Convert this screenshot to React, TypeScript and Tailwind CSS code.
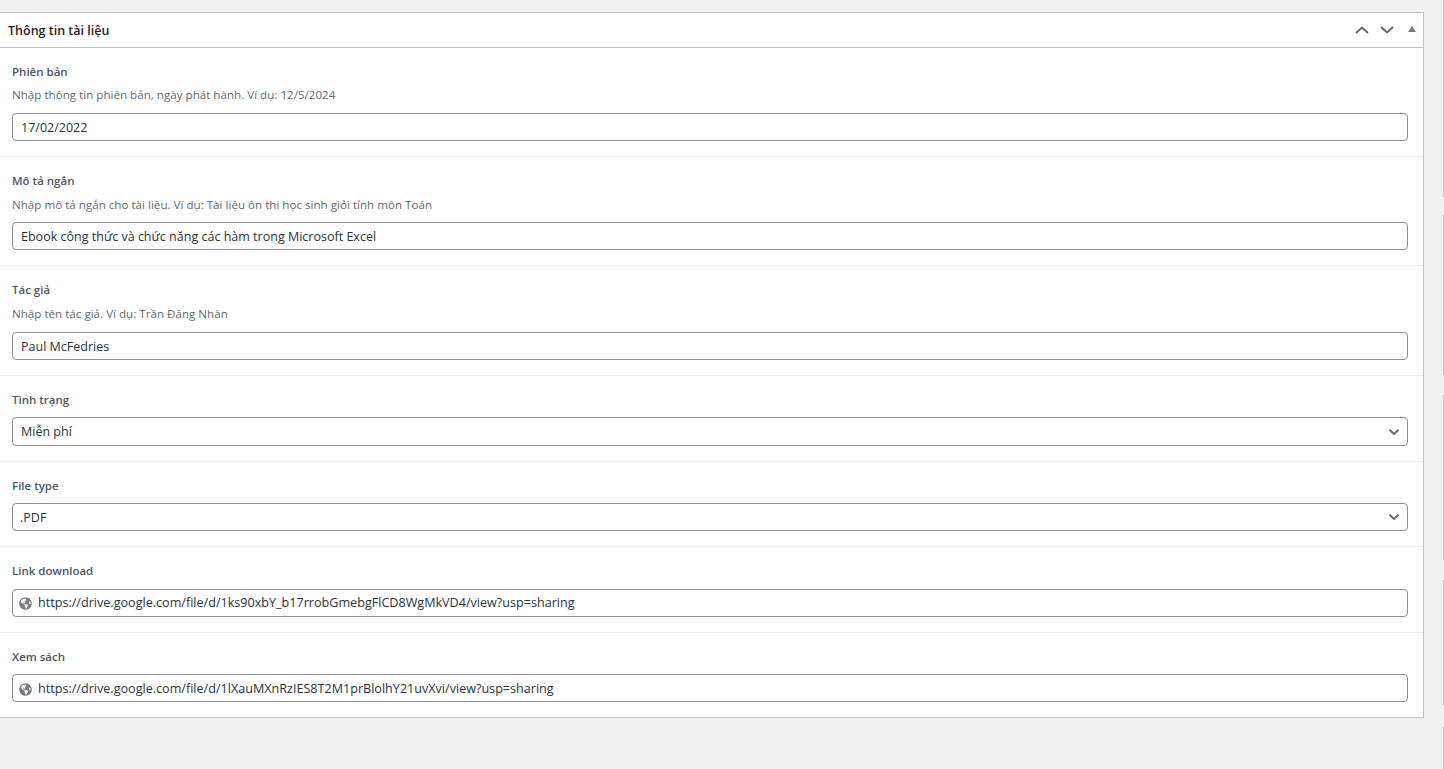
import React from "react";
import { FaGlobeAmericas } from "react-icons/fa";

const font = { fontFamily: '"Open Sans", "Noto Sans", sans-serif' };

function Caret() {
  return (
    <svg width="12" height="8" viewBox="0 0 12 8" className="absolute right-[7px] top-1/2 -translate-y-1/2">
      <path d="M1.5 1.800 6 6l4.500-4.200" fill="none" stroke="#646970" strokeWidth="2" />
    </svg>
  );
}

function Chevron({ up, cls }: { up?: boolean; cls: string }) {
  return (
    <svg width="14" height="8" viewBox="0 0 14 8" className={cls}>
      <path d={up ? "M1 7 7 1.500 13 7" : "M1 1 7 6.500 13 1"} fill="none" stroke="#646970" strokeWidth="2" />
    </svg>
  );
}

function Box({
  h,
  pl = "pl-[8px]",
  text = "pt-[2px] text-[12.53px]",
  children,
}: {
  h: string;
  pl?: string;
  text?: string;
  children: React.ReactNode;
}) {
  return (
    <div className={`relative flex items-center rounded-[4px] border border-[#8c8f94] bg-white text-[#2c3338] ${text} ${h} ${pl}`}>
      {children}
    </div>
  );
}

function Field({
  label,
  desc,
  descTop = "mt-[5px]",
  last,
  children,
  cls,
}: {
  label: string;
  desc?: string;
  descTop?: string;
  last?: boolean;
  children: React.ReactNode;
  cls: string;
}) {
  return (
    <div className={`pl-[12px] pr-[15px] pt-[15px] ${cls} ${last ? "" : "border-b border-[#f0f0f0]"}`}>
      <div className="text-[11.5px] leading-[18px] font-semibold text-[#50575e]">{label}</div>
      {desc && <div className={`${descTop} text-[11.62px] leading-[18px] text-[#646970]`}>{desc}</div>}
      {children}
    </div>
  );
}

function LinkValue({ url }: { url: string }) {
  return (
    <>
      <FaGlobeAmericas size={13} color="#787c82" className="shrink-0" />
      <span className="ml-[6px]">{url}</span>
    </>
  );
}

function EdgeLine() {
  return (
    <div className="absolute right-0 top-0 flex h-full w-[1px] flex-col">
      <div className="h-[197px] bg-[#c6c6c6]" />
      <div className="h-[18px]" />
      <div className="h-[160px] bg-[#c6c6c6]" />
      <div className="h-[20px]" />
      <div className="h-[165px] bg-[#c6c6c6]" />
      <div className="h-[20px]" />
      <div className="h-[125px] bg-[#c6c6c6]" />
      <div className="h-[22px]" />
      <div className="h-[42px] bg-[#c6c6c6]" />
    </div>
  );
}

export default function App() {
  return (
    <div className="relative h-[769px] overflow-hidden bg-[#f0f0f1] pt-[12px]" style={font}>
      <EdgeLine />
      <div className="w-[1424px] border-y border-r border-[#c3c4c7] bg-white">
        <div className="flex h-[35px] items-center justify-between border-b border-[#c3c4c7] pl-[8px] pr-[7px]">
          <div className="pt-[2px] text-[12.5px] font-semibold text-[#1d2327]">Thông tin tài liệu</div>
          <div className="flex items-center">
            <Chevron up cls="mr-[11px]" />
            <Chevron cls="mr-[14px]" />
            <div className="mb-[2px] h-0 w-0 border-x-[4px] border-b-[6px] border-x-transparent border-b-[#787c82]" />
          </div>
        </div>
        <Field cls="h-[109px]" label="Phiên bản" desc="Nhập thông tin phiên bản, ngày phát hành. Ví dụ: 12/5/2024">
          <div className="mt-[9px]"><Box h="h-[28px]">17/02/2022</Box></div>
        </Field>
        <Field cls="h-[109px]" descTop="mt-[6px]" label="Mô tả ngắn" desc="Nhập mô tả ngắn cho tài liệu. Ví dụ: Tài liệu ôn thi học sinh giỏi tỉnh môn Toán">
          <div className="mt-[8px]"><Box h="h-[28px]">Ebook công thức và chức năng các hàm trong Microsoft Excel</Box></div>
        </Field>
        <Field cls="h-[110px]" descTop="mt-[6px]" label="Tác giả" desc="Nhập tên tác giả. Ví dụ: Trần Đăng Nhàn">
          <div className="mt-[9px]"><Box h="h-[28px]">Paul McFedries</Box></div>
        </Field>
        <Field cls="h-[86px]" label="Tình trạng">
          <div className="mt-[8px]"><Box h="h-[29px]" text="pt-[1px] text-[12.53px]">Miễn phí<Caret /></Box></div>
        </Field>
        <Field cls="h-[85px]" label="File type">
          <div className="mt-[8px]"><Box h="h-[28px]" pl="pl-[7px]">.PDF<Caret /></Box></div>
        </Field>
        <Field cls="h-[86px]" label="Link download">
          <div className="mt-[9px]">
            <Box h="h-[28px]" pl="pl-[6px]" text="pt-[1px] text-[12.6px]">
              <LinkValue url="https://drive.google.com/file/d/1ks90xbY_b17rrobGmebgFlCD8WgMkVD4/view?usp=sharing" />
            </Box>
          </div>
        </Field>
        <Field cls="h-[84px]" last label="Xem sách">
          <div className="mt-[8px]">
            <Box h="h-[28px]" pl="pl-[6px]" text="pt-[2px] text-[12.6px]">
              <LinkValue url="https://drive.google.com/file/d/1lXauMXnRzIES8T2M1prBlolhY21uvXvi/view?usp=sharing" />
            </Box>
          </div>
        </Field>
      </div>
    </div>
  );
}
